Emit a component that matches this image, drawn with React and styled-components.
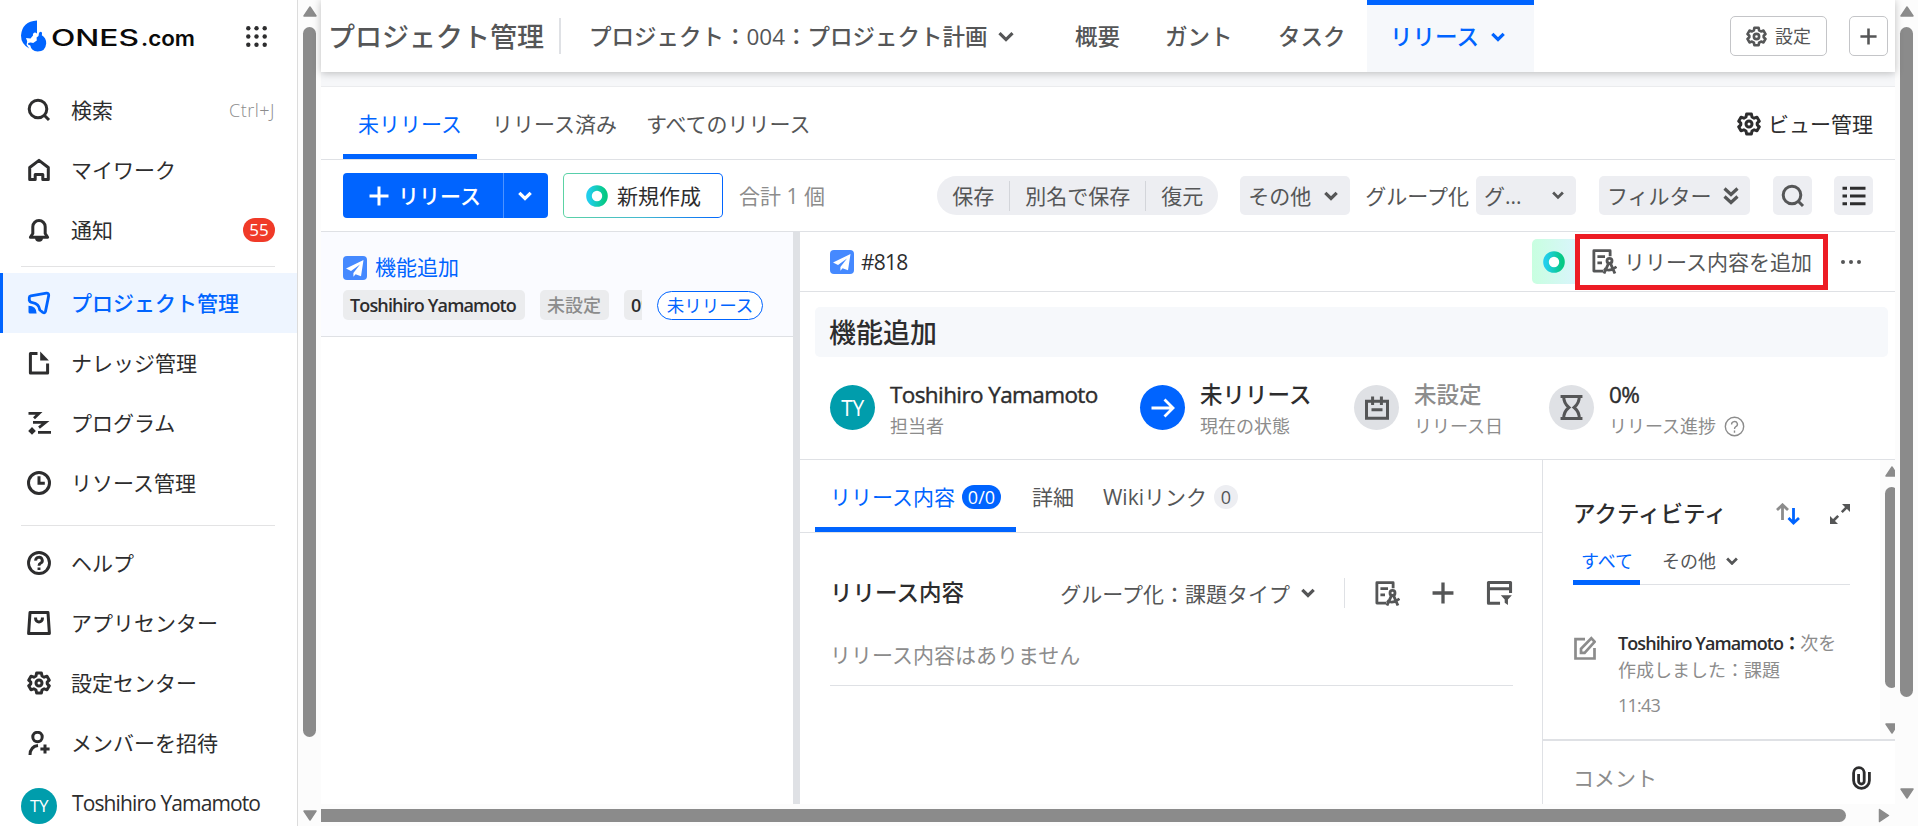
import React from 'react';
import styled, { createGlobalStyle, css } from 'styled-components';

const theme = {
  blue: '#0064ff',
  text: '#2d2d2e',
  sub: '#555657',
  muted: '#8c8c8c',
  line: '#dfe1e5',
  fill: '#edeef2',
  thumb: '#8b8b8b',
  teal: '#009dac',
};

const GlobalStyle = createGlobalStyle`
  * {
    box-sizing: border-box;
  }

  body {
    margin: 0;
    overflow: hidden;
    background: #fff;
    color: ${theme.text};
    font-family: 'Open Sans', 'Noto Sans CJK JP', sans-serif;
    font-size: 21px;
    line-height: 30px;
    white-space: nowrap;
  }

  svg {
    display: block;
    flex: none;
  }
`;

const Page = styled.div`
  display: flex;
  width: 1918px;
  height: 826px;
  overflow: hidden;
`;

/* ---------- sidebar ---------- */

const Sidebar = styled.aside`
  display: flex;
  flex-direction: column;
  flex: none;
  width: 298px;
  border-right: 1px solid #dcdcdc;
`;

const Brand = styled.div`
  display: flex;
  align-items: center;
  justify-content: space-between;
  height: 80px;
  padding: 0 30px 7px 21px;
`;

const NavGroup = styled.nav`
  padding-bottom: ${({ $bottom = 0 }) => $bottom}px;
`;

const NavItem = styled.div`
  display: flex;
  align-items: center;
  height: 60px;
  padding: 0 22px 0 27px;
  color: ${theme.text};

  ${({ $active }) => $active && css`
    padding-left: 24px;
    border-left: 3px solid ${theme.blue};
    background: #eef5ff;
    color: ${theme.blue};
    font-weight: 500;
  `}
`;

const NavLabel = styled.span`
  flex: 1;
  margin: -1px 0 0 20px;
`;

const Shortcut = styled.span`
  color: ${theme.muted};
  font-size: 18px;
  font-weight: 300;
  letter-spacing: 0.5px;
`;

const CountBadge = styled.span`
  width: 32px;
  height: 24px;
  border-radius: 12px;
  background: #f03a28;
  color: #fff;
  font-size: 17px;
  line-height: 24px;
  text-align: center;
`;

const NavDivider = styled.div`
  height: 1px;
  margin: 0 22px ${({ $after }) => $after}px 21px;
  background: #e3e3e4;
`;

const UserRow = styled.div`
  display: flex;
  margin-top: 15px;
  padding-left: 21px;
`;

const Avatar = styled.span`
  display: flex;
  align-items: center;
  justify-content: center;
  flex: none;
  width: ${({ $size }) => $size}px;
  height: ${({ $size }) => $size}px;
  border-radius: 50%;
  background: ${({ $bg }) => $bg || theme.teal};
  color: ${({ $bg }) => ($bg ? theme.sub : '#fff')};
  font-size: ${({ $size }) => ($size > 40 ? 21 : 17)}px;
  letter-spacing: -0.4px;
`;

const UserName = styled.span`
  margin-left: 15px;
  letter-spacing: -0.88px;
`;

/* ---------- scrollbars ---------- */

const VTrack = styled.div`
  display: flex;
  flex-direction: column;
  align-items: center;
  flex: none;
  width: ${({ $width }) => $width}px;
  padding: 6px 0 5px;
  background: #fcfcfc;
`;

const VThumb = styled.div`
  width: 13px;
  height: ${({ $height }) => $height}px;
  margin: 10px 0 auto;
  border-radius: 7px;
  background: ${theme.thumb};
`;

const HTrack = styled.div`
  display: flex;
  align-items: center;
  flex: none;
  height: 22px;
  padding-right: 27px;
  background: #fcfcfc;
`;

const HThumb = styled.div`
  width: 1525px;
  height: 13px;
  margin-right: auto;
  border-radius: 0 7px 7px 0;
  background: ${theme.thumb};
`;

/* ---------- header ---------- */

const Main = styled.main`
  display: flex;
  flex-direction: column;
  flex: none;
  width: 1574px;
`;

const Column = styled.div`
  display: flex;
  flex-direction: column;
  flex: none;
  width: 1597px;
`;

const Upper = styled.div`
  display: flex;
  height: 804px;
`;

const Header = styled.header`
  position: relative;
  display: flex;
  align-items: center;
  flex: none;
  height: 72px;
  padding: 0 7px 0 7px;
  background: #fff;
  box-shadow: 0 1px 8px rgba(0, 0, 0, 0.25);
  color: ${theme.sub};
  font-size: 22.5px;
  font-weight: 500;
`;

const AppTitle = styled.h1`
  width: 231px;
  margin: 0;
  padding-top: 2px;
  font-size: 27px;
  font-weight: 500;
`;

const HeaderDivider = styled.div`
  width: 2px;
  height: 36px;
  margin-right: 28px;
  background: ${theme.line};
`;

const ProjectName = styled.div`
  display: flex;
  align-items: center;
  gap: 10px;
  width: 486px;
  padding-top: 1px;
`;

const HeaderTab = styled.span`
  width: ${({ $width }) => $width}px;
  padding-top: 1px;
`;

const HeaderActiveTab = styled.div`
  display: flex;
  align-items: center;
  gap: 12px;
  width: 167px;
  height: 72px;
  margin-right: auto;
  padding: 0 0 4px 23px;
  border-top: 5px solid ${theme.blue};
  background: #f6f8fb;
  color: ${theme.blue};
`;

const OutlineButton = styled.button`
  display: flex;
  align-items: center;
  justify-content: center;
  gap: 8px;
  width: ${({ $width }) => $width}px;
  height: 40px;
  margin: 0 0 0 22px;
  padding: 0;
  border: 1px solid #c4c5c8;
  border-radius: 5px;
  background: #fff;
  color: ${theme.sub};
  font: inherit;
  font-size: 18px;
  font-weight: 400;
`;

const Gap = styled.div`
  flex: none;
  height: 15px;
  border-bottom: 1px solid #ebecee;
  background: #f6f7f9;
`;

/* ---------- view tabs and toolbar ---------- */

const ViewTabs = styled.div`
  display: flex;
  flex: none;
  height: 73px;
  padding: 0 22px;
  border-bottom: 1px solid ${theme.line};
  color: ${theme.sub};
`;

const ViewTab = styled.div`
  display: flex;
  align-items: center;
  height: 72px;
  padding: 2px 0 0;
  margin-right: 29px;

  ${({ $active, $after = 15 }) => $active && css`
    padding: 6px 15px 0;
    margin-right: ${$after}px;
    border-bottom: 5px solid ${theme.blue};
    color: ${theme.blue};
  `}
`;

const ManageViews = styled.div`
  display: flex;
  align-items: center;
  gap: 7px;
  margin-left: auto;
  padding-top: 2px;
  color: ${theme.text};
`;

const Toolbar = styled.div`
  display: flex;
  align-items: center;
  flex: none;
  height: 72px;
  padding: 0 22px;
  border-bottom: 1px solid ${theme.line};
  color: ${theme.sub};
`;

const PrimaryButton = styled.div`
  display: flex;
  align-items: center;
  width: 205px;
  height: 45px;
  border-radius: 4px;
  background: ${theme.blue};
  color: #fff;
  font-weight: 500;
`;

const PrimaryMain = styled.span`
  display: flex;
  align-items: center;
  gap: 9px;
  width: 161px;
  height: 45px;
  padding-left: 26px;
  border-right: 1px solid #4d93ff;
`;

const PrimaryArrow = styled.span`
  display: flex;
  flex: 1;
  justify-content: center;
  padding-right: 2px;
`;

const AiButton = styled.div`
  display: flex;
  align-items: center;
  gap: 9px;
  width: 160px;
  height: 45px;
  margin: 0 16px 0 15px;
  padding-left: 22px;
  border: 1px solid transparent;
  border-radius: 5px;
  background: linear-gradient(#fff, #fff) padding-box, linear-gradient(90deg, #5cd3a4, #43b9d0 50%, #0064ff) border-box;
  color: ${theme.text};
`;

const Total = styled.span`
  margin-right: auto;
  color: ${theme.muted};
`;

const SaveGroup = styled.div`
  display: flex;
  align-items: center;
  justify-content: center;
  width: 281px;
  height: 39px;
  margin-right: 22px;
  border-radius: 20px;
  background: ${theme.fill};
`;

const SaveAction = styled.span`
  padding: 0 15px;

  & + & {
    border-left: 1px solid #d3d5da;
  }
`;

const ToolButton = styled.div`
  display: flex;
  align-items: center;
  justify-content: ${({ $center }) => ($center ? 'center' : 'space-between')};
  width: ${({ $width = 39 }) => $width}px;
  height: 39px;
  margin-right: ${({ $after = 0 }) => $after}px;
  padding: ${({ $center, $pad = 12 }) => ($center ? 0 : `0 ${$pad}px 0 8px`)};
  border-radius: 5px;
  background: ${theme.fill};
`;

const ToolLabel = styled.span`
  margin-right: 7px;
`;

/* ---------- release list ---------- */

const Body = styled.div`
  display: flex;
  flex: 1;
  min-height: 0;
`;

const ReleaseList = styled.div`
  flex: none;
  width: 472px;
`;

const ReleaseItem = styled.div`
  height: 105px;
  padding: 20px 22px 0;
  border-bottom: 1px solid ${theme.line};
  background: #fafbff;
`;

const ReleaseTitle = styled.div`
  display: flex;
  align-items: center;
  gap: 8px;
  height: 32px;
  color: ${theme.blue};

  span {
    margin-top: -2px;
  }
`;

const Chips = styled.div`
  display: flex;
  align-items: center;
  gap: 15px;
  margin-top: 6px;
`;

const Chip = styled.span`
  width: ${({ $width }) => $width}px;
  height: 30px;
  padding-left: 7px;
  overflow: hidden;
  border-radius: ${({ $cut }) => ($cut ? '5px 0 0 5px' : '5px')};
  background: #ebecee;
  color: ${({ $muted }) => ($muted ? theme.muted : theme.text)};
  font-size: 18px;
  font-weight: ${({ $muted }) => ($muted ? 500 : 600)};
  letter-spacing: ${({ $tight }) => ($tight ? '-0.85px' : 0)};
`;

const StatusPill = styled.span`
  width: 106px;
  height: 29px;
  border: 1px solid ${theme.blue};
  border-radius: 15px;
  background: #fff;
  color: ${theme.blue};
  font-size: 17.5px;
  line-height: 27px;
  text-align: center;
`;

const Splitter = styled.div`
  flex: none;
  width: 7px;
  background: ${theme.line};
`;

/* ---------- release detail ---------- */

const Detail = styled.section`
  display: flex;
  flex-direction: column;
  flex: 1;
  min-width: 0;
`;

const DetailHead = styled.div`
  display: flex;
  align-items: center;
  flex: none;
  height: 60px;
  padding: 0 33px 0 30px;
  border-bottom: 1px solid ${theme.line};
`;

const IssueKey = styled.span`
  margin: 0 auto 0 7px;
  letter-spacing: -0.8px;
`;

const AiSquare = styled.div`
  display: flex;
  align-items: center;
  width: 43px;
  height: 45px;
  padding-left: 11px;
  border-radius: 5px 0 0 5px;
  background: linear-gradient(90deg, #c8ffe0, #d9f5fb);
`;

const Highlight = styled.div`
  display: flex;
  align-items: center;
  gap: 7px;
  width: 253px;
  height: 56px;
  margin-right: 12px;
  padding-left: 12px;
  border: 5px solid #ed1c24;
  color: ${theme.sub};
`;

const DetailTitle = styled.h2`
  flex: none;
  height: 50px;
  margin: 15px 7px 0 15px;
  padding: 1px 0 0 14px;
  border-radius: 5px;
  background: #f6f8fb;
  font-size: 27px;
  font-weight: 500;
  line-height: 50px;
`;

const Summary = styled.div`
  display: flex;
  flex: none;
  height: 103px;
  padding: 28px 0 0 30px;
  border-bottom: 1px solid ${theme.line};
`;

const SummaryItem = styled.div`
  display: flex;
  width: ${({ $width }) => $width}px;
`;

const SummaryText = styled.div`
  margin: -5px 0 0 15px;
`;

const SummaryValue = styled.div`
  height: 31px;
  color: ${({ $muted }) => ($muted ? theme.muted : theme.text)};
  font-size: 22.5px;
  font-weight: 500;
  letter-spacing: ${({ $tight }) => ($tight ? '-0.6px' : 0)};
  -webkit-text-stroke: ${({ $tight }) => ($tight ? '0.4px currentColor' : 0)};
`;

const SummaryLabel = styled.div`
  display: flex;
  align-items: center;
  gap: 8px;
  color: ${theme.muted};
  font-size: 18px;
`;

const DetailBody = styled.div`
  display: flex;
  flex: 1;
  min-height: 0;
`;

const DetailMain = styled.div`
  flex: none;
  width: 743px;
  border-right: 1px solid ${theme.line};
`;

const DetailTabs = styled.div`
  display: flex;
  height: 73px;
  padding-left: 15px;
  border-bottom: 1px solid ${theme.line};
  color: ${theme.sub};
`;

const TabBadge = styled.span`
  width: ${({ $width }) => $width}px;
  height: 24px;
  margin-left: 7px;
  border-radius: 12px;
  background: ${({ $solid }) => ($solid ? theme.blue : theme.fill)};
  color: ${({ $solid }) => ($solid ? '#fff' : theme.sub)};
  font-size: 18px;
  line-height: 24px;
  text-align: center;
`;

const Section = styled.div`
  padding: 37px 29px 0 30px;
  color: ${theme.sub};
`;

const SectionHead = styled.div`
  display: flex;
  align-items: center;
  height: 46px;
`;

const SectionTitle = styled.h3`
  margin: 0 auto 0 0;
  color: ${theme.text};
  font-size: 22.5px;
  font-weight: 500;
`;

const GroupBy = styled.span`
  margin-right: 11px;
  padding-top: 2px;
`;

const VLine = styled.div`
  width: 1px;
  height: 30px;
  margin: 0 30px 0 29px;
  background: ${theme.line};
`;

const SectionActions = styled.div`
  display: flex;
  align-items: center;
  gap: 32px;
`;

const Empty = styled.div`
  height: 70px;
  padding-top: 24px;
  border-bottom: 1px solid ${theme.line};
  color: ${theme.muted};
`;

/* ---------- activity ---------- */

const Activity = styled.aside`
  display: flex;
  flex-direction: column;
  flex: 1;
  min-width: 0;
`;

const ActivityScroll = styled.div`
  display: flex;
  flex: none;
  height: 279px;
  overflow: hidden;
`;

const ActivityContent = styled.div`
  flex: none;
  width: 337px;
  padding: 39px 30px 0 30px;
`;

const ActivityHead = styled.div`
  display: flex;
  align-items: center;
  height: 30px;
`;

const ActivityTitle = styled.h3`
  margin: 0 auto 0 0;
  font-size: 22.5px;
  font-weight: 500;
`;

const ExpandWrap = styled.span`
  margin-left: 30px;
`;

const ActivityTabs = styled.div`
  display: flex;
  height: 41px;
  margin-top: 15px;
  border-bottom: 1px solid ${theme.line};
  color: ${theme.sub};
  font-size: 18px;
`;

const ActivityTab = styled.div`
  display: flex;
  align-items: center;
  gap: 10px;
  height: 34px;
  padding: 0 7px;
  margin-right: 15px;

  ${({ $active }) => $active && css`
    height: 41px;
    padding: 0 7px 2px 8px;
    border-bottom: 5px solid ${theme.blue};
    color: ${theme.blue};
  `}
`;

const ActivityEntry = styled.div`
  display: flex;
  gap: 22px;
  margin-top: 45px;
  padding-left: 1px;
  font-size: 18px;
  line-height: 27px;
  color: ${theme.muted};

  svg {
    margin-top: 6px;
  }
`;

const Actor = styled.span`
  color: ${theme.text};
  font-weight: 600;
  letter-spacing: -0.9px;
`;

const Time = styled.div`
  margin-top: 8px;
  font-size: 18px;
  letter-spacing: -0.8px;
`;

const CommentBar = styled.div`
  display: flex;
  align-items: center;
  justify-content: space-between;
  flex: 1;
  padding: 10px 24px 0 30px;
  border-top: 2px solid ${theme.line};
  color: ${theme.muted};

  svg {
    color: ${theme.text};
  }
`;

const ScrollClip = styled.div`
  display: flex;
  flex: none;
  width: 15px;
  overflow: hidden;
`;

/* ---------- icons ---------- */

const Svg = ({ size = 24, w, h, box = '0 0 24 24', sw = 3, children }) => (
  <svg
    width={w || size}
    height={h || size}
    viewBox={box}
    fill="none"
    stroke="currentColor"
    strokeWidth={sw}
  >
    {children}
  </svg>
);

const ScrollArrow = ({ dir }) => {
  const turn = { up: 0, right: 90, down: 180 }[dir];
  return (
    <svg width="14" height="11" viewBox="0 0 14 11" overflow="visible">
      <path
        d="M7 1 L13 10 H1 Z"
        fill={theme.thumb}
        stroke={theme.thumb}
        strokeWidth="1.5"
        strokeLinejoin="round"
        transform={`rotate(${turn} 7 5.5)`}
      />
    </svg>
  );
};

const Chevron = ({ w = 14, sw = 3.2 }) => (
  <Svg w={w} h={(w * 10) / 14} box="0 0 14 10" sw={sw}>
    <path d="M1.3 1.8 L7 7.5 L12.7 1.8" />
  </Svg>
);

const DoubleChevron = () => (
  <Svg w={16} h={18} box="0 0 16 18" sw={3.2}>
    <path d="M1.5 1.5 L8 7.5 L14.5 1.5 M1.5 9.5 L8 15.5 L14.5 9.5" />
  </Svg>
);

const Plus = ({ size = 20, sw = 3 }) => (
  <Svg size={size} box="0 0 20 20" sw={sw}>
    <path d="M10 0.5 V19.5 M0.5 10 H19.5" />
  </Svg>
);

const SearchIcon = () => (
  <Svg>
    <circle cx="11" cy="11" r="8.8" />
    <path d="M17 17 L22 22" />
  </Svg>
);

const HomeIcon = () => (
  <Svg>
    <path d="M2.7 9.5 L12 2.4 L21.3 9.5 V21.6 H15.8 V16.5 H8.2 V21.6 H2.7 Z" strokeLinejoin="round" />
  </Svg>
);

const BellIcon = () => (
  <Svg>
    <path d="M3.4 19.2 L5.8 15.5 V8.8 A6.2 6.2 0 0 1 18.2 8.8 V15.5 L20.6 19.2 Z" strokeLinejoin="round" />
    <path d="M8 19.8 H16 A4 4 0 0 1 8 19.8 Z" fill="currentColor" stroke="none" />
  </Svg>
);

const ProjectIcon = () => (
  <Svg sw={2.8}>
    <path
      d="M2.3 10 V6.6 Q2.3 5.2 3.8 4.9 L19.4 2.2 Q22 2 21.7 4.6 L18.5 20.4 Q17.8 22.6 15.8 21.3 L12.8 19 Q12 12.5 5.5 11.6 Q2.3 11.4 2.3 8.5"
      strokeLinejoin="round"
    />
    <path d="M1.5 14.8 Q9.5 15 9.6 22.6 H3 Q1.5 22.6 1.5 21 Z" fill="currentColor" stroke="none" />
  </Svg>
);

const WikiIcon = () => (
  <Svg>
    <path d="M10.5 2.4 H3.4 V22 H20.6 V12.5" strokeLinejoin="round" />
    <path d="M13.2 0.6 L21.9 9.4 H13.2 Z" fill="currentColor" stroke="none" />
  </Svg>
);

const ProgramIcon = () => (
  <Svg sw={2.8}>
    <path d="M1.5 2.4 H12 L7 7.2 M6 11.4 H18.5 L12 16.6 M11 21.4 H24" />
    <path d="M5 16 L8.8 19.9 L5 23.8 L1.2 19.9 Z" fill="currentColor" stroke="none" />
  </Svg>
);

const ClockIcon = () => (
  <Svg>
    <circle cx="12" cy="12" r="10.5" />
    <path d="M12 5.2 V12.3 H17.8" />
  </Svg>
);

const HelpIcon = ({ size = 24, sw = 2.9 }) => (
  <Svg size={size} sw={sw}>
    <circle cx="12" cy="12" r="10.5" />
    <path d="M8.7 9.7 A3.3 3.1 0 1 1 13.5 12.2 Q12 13 12 14.8 M12 16.6 V19" />
  </Svg>
);

const StoreIcon = () => (
  <Svg>
    <path d="M3 1.6 H21 L22.4 22.4 H1.6 Z" strokeLinejoin="round" />
    <path d="M8.6 6.4 V7.6 A3.4 3.4 0 0 0 15.4 7.6 V6.4" />
  </Svg>
);

const GearIcon = ({ size = 24 }) => (
  <Svg size={size} sw={3}>
    <path
      d="M9.6 2 H14.4 L15 5 L17.2 6.2 L20 5.2 L22.3 9.2 L20.2 11.2 V12.8 L22.3 14.8 L20 18.8 L17.2 17.8 L15 19 L14.4 22 H9.6 L9 19 L6.8 17.8 L4 18.8 L1.7 14.8 L3.8 12.8 V11.2 L1.7 9.2 L4 5.2 L6.8 6.2 L9 5 Z"
      strokeLinejoin="round"
    />
    <circle cx="12" cy="12" r="3" />
  </Svg>
);

const InviteIcon = () => (
  <Svg>
    <circle cx="10.5" cy="6" r="4.7" />
    <path d="M3 24 Q3.2 15.6 11 14.6 M18 13.4 V22.6 M13.4 18 H22.6" />
  </Svg>
);

const GridIcon = () => (
  <svg width="21" height="21" viewBox="0 0 21 21" fill={theme.text}>
    {[2.3, 10.5, 18.7].map(y => [2.3, 10.5, 18.7].map(x => (
      <circle key={`${x}-${y}`} cx={x} cy={y} r="2.2" />
    )))}
  </svg>
);

const Logo = () => (
  <svg width="176" height="34" viewBox="0 0 176 34">
    <path
      d="M16 0.5 V13.5 L14.2 12.4 Q11.5 12.6 12 15.6 L9.5 18.5 L5 18 L6.2 21.3 L5.6 24.8 L8.2 28.5 Q0 24 0 15.5 Q1 1.5 16 0.5 Z"
      fill={theme.blue}
    />
    <path
      d="M19.5 11.8 Q21.6 11.8 20.8 15.2 Q25.2 17.5 25.2 23.4 Q24.5 31.4 16.6 31.6 Q10.2 31 9.3 25.5 L7 24.6 Q6.6 22.4 9.8 22.5 L12.2 23 L15.8 20.5 L15.6 17.6 L17.5 16 L18 12.8 Z"
      fill={theme.blue}
    />
    <g fill="#0a0a0a" fontFamily="Inter">
      <text x="30" y="26" fontSize="22.5" fontWeight="500" textLength="88" lengthAdjust="spacingAndGlyphs">ONES</text>
      <text x="120" y="26" fontSize="21" fontWeight="600" textLength="54" lengthAdjust="spacingAndGlyphs">.com</text>
    </g>
  </svg>
);

const PlaneIcon = () => (
  <svg width="24" height="24" viewBox="0 0 24 24">
    <rect width="24" height="24" rx="4" fill="#4589ff" />
    <path d="M3 12.4 L20.5 4 L18 20.2 L12.6 18.2 L10.4 20.8 V17 L17 8.6 L8 15 Z" fill="#fff" />
  </svg>
);

const RingIcon = () => (
  <svg width="22" height="22" viewBox="0 0 22 22">
    <defs>
      <linearGradient id="ring" x1="0" x2="1">
        <stop offset="0" stopColor="#22ceec" />
        <stop offset="1" stopColor="#05c983" />
      </linearGradient>
    </defs>
    <circle cx="11" cy="11" r="8" fill="#fff" stroke="url(#ring)" strokeWidth="5.6" />
  </svg>
);

const ListIcon = () => (
  <Svg w={24} h={20} box="0 0 24 20" sw={3}>
    <path d="M0.5 2.2 H5 M8 2.2 H23.5 M0.5 10 H5 M8 10 H23.5 M0.5 17.8 H5 M8 17.8 H23.5" stroke={theme.text} />
  </Svg>
);

const ScopeIcon = () => (
  <Svg size={25} sw={2.7}>
    <path d="M11 21.2 H1.8 V1.6 H17.4 V7 M5.2 7.4 H12.5 M5.2 13.4 H9.6" strokeLinejoin="round" />
    <circle cx="16.8" cy="11.4" r="2.4" />
    <path d="M16 13.5 L11.5 23.5 M17.6 13.5 L22 23.5 M11.5 18.8 Q17 22.5 23.5 17" />
  </Svg>
);

const FilterCardIcon = () => (
  <Svg w={27} h={26} sw={2.8}>
    <path d="M12.5 21.4 H1.8 V2.4 H22.2 V12 M1.8 8 H22.2" strokeLinejoin="round" />
    <path d="M13.2 14 H23.4 L19.8 18 V23 L16.8 21 V18 Z" fill="currentColor" stroke="none" />
  </Svg>
);

const DotsIcon = () => (
  <svg width="22" height="6" viewBox="0 0 22 6" fill={theme.sub}>
    <circle cx="3" cy="3" r="2" />
    <circle cx="11" cy="3" r="2" />
    <circle cx="19" cy="3" r="2" />
  </svg>
);

const ArrowIcon = () => (
  <Svg size={24} sw={2.8}>
    <path d="M0.5 12 H22 M13.5 3.5 L22 12 L13.5 20.5" stroke="#fff" />
  </Svg>
);

const CalendarIcon = () => (
  <Svg size={24} sw={3}>
    <path d="M1.5 5.2 H22.5 V22.2 H1.5 Z M7.6 0.5 V9 M16.4 0.5 V9 M6.5 13.8 H17.5" />
  </Svg>
);

const HourglassIcon = () => (
  <Svg size={25} sw={2.9}>
    <path d="M1.5 1.5 H22.5 M1.5 22.5 H22.5 M4.5 1.5 Q4.5 8 9.5 12 Q4.5 16 4.5 22.5 M19.5 1.5 Q19.5 8 14.5 12 Q19.5 16 19.5 22.5" />
  </Svg>
);

const SortIcon = () => (
  <Svg w={24} h={22} box="0 0 24 22" sw={2.8}>
    <path d="M6.5 17 V2 M1 7 L6.5 1.8 L12 7" stroke={theme.muted} />
    <path d="M17.5 5 V20 M12.5 15 L17.5 20 L23 15" stroke={theme.blue} />
  </Svg>
);

const ExpandIcon = () => (
  <Svg w={20} h={20} box="0 0 20 20" sw={2.6}>
    <path d="M11.8 8.2 L17 3 M8.2 11.8 L3 17" stroke={theme.sub} />
    <path d="M12 0 H20 V8 Z M0 12 L8 20 H0 Z" fill={theme.sub} stroke="none" />
  </Svg>
);

const EditIcon = () => (
  <Svg w={22} h={24} box="0 0 22 24" sw={2.7}>
    <path d="M11 3.2 H1.5 V22.5 H20.5 V12" />
    <path d="M7 16.8 V12.8 L17.3 2.2 L20.6 5.8 L10.6 16.8 Z" />
  </Svg>
);

const ClipIcon = () => (
  <Svg w={19} h={24} box="0 0 19 24" sw={2.8}>
    <path d="M9.5 18 A2.9 2.9 0 0 1 6.6 15 V8 M12.2 5.5 V15 A2.9 2.9 0 0 1 9.4 18 M17.4 6 V14.5 A7.9 7.9 0 0 1 1.6 14.5 V7 A5.3 5.3 0 0 1 12.2 7" />
  </Svg>
);

const topNav = [
  { label: '検索', icon: <SearchIcon />, extra: <Shortcut>Ctrl+J</Shortcut> },
  { label: 'マイワーク', icon: <HomeIcon /> },
  { label: '通知', icon: <BellIcon />, extra: <CountBadge>55</CountBadge> },
];

const appNav = [
  { label: 'プロジェクト管理', icon: <ProjectIcon />, active: true },
  { label: 'ナレッジ管理', icon: <WikiIcon /> },
  { label: 'プログラム', icon: <ProgramIcon /> },
  { label: 'リソース管理', icon: <ClockIcon /> },
];

const bottomNav = [
  { label: 'ヘルプ', icon: <HelpIcon /> },
  { label: 'アプリセンター', icon: <StoreIcon /> },
  { label: '設定センター', icon: <GearIcon /> },
  { label: 'メンバーを招待', icon: <InviteIcon /> },
];

const NavList = ({ items, bottom }) => (
  <NavGroup $bottom={bottom}>
    {items.map(item => (
      <NavItem key={item.label} $active={item.active}>
        {item.icon}
        <NavLabel>{item.label}</NavLabel>
        {item.extra}
      </NavItem>
    ))}
  </NavGroup>
);

const ReleaseDetail = () => (
  <Detail>
    <DetailHead>
      <PlaneIcon />
      <IssueKey>#818</IssueKey>
      <AiSquare><RingIcon /></AiSquare>
      <Highlight>
        <ScopeIcon />
        リリース内容を追加
      </Highlight>
      <DotsIcon />
    </DetailHead>
    <DetailTitle>機能追加</DetailTitle>
    <Summary>
      <SummaryItem $width={310}>
        <Avatar $size={45}>TY</Avatar>
        <SummaryText>
          <SummaryValue $tight>Toshihiro Yamamoto</SummaryValue>
          <SummaryLabel>担当者</SummaryLabel>
        </SummaryText>
      </SummaryItem>
      <SummaryItem $width={214}>
        <Avatar $size={45} $bg={theme.blue}><ArrowIcon /></Avatar>
        <SummaryText>
          <SummaryValue>未リリース</SummaryValue>
          <SummaryLabel>現在の状態</SummaryLabel>
        </SummaryText>
      </SummaryItem>
      <SummaryItem $width={195}>
        <Avatar $size={45} $bg={theme.line}><CalendarIcon /></Avatar>
        <SummaryText>
          <SummaryValue $muted>未設定</SummaryValue>
          <SummaryLabel>リリース日</SummaryLabel>
        </SummaryText>
      </SummaryItem>
      <SummaryItem $width={220}>
        <Avatar $size={45} $bg={theme.line}><HourglassIcon /></Avatar>
        <SummaryText>
          <SummaryValue $tight>0%</SummaryValue>
          <SummaryLabel>
            リリース進捗
            <HelpIcon size={21} sw={1.6} />
          </SummaryLabel>
        </SummaryText>
      </SummaryItem>
    </Summary>
    <DetailBody>
      <DetailMain>
        <DetailTabs>
          <ViewTab $active $after={16}>
            リリース内容
            <TabBadge $solid $width={39}>0/0</TabBadge>
          </ViewTab>
          <ViewTab>詳細</ViewTab>
          <ViewTab>
            Wikiリンク
            <TabBadge $width={24}>0</TabBadge>
          </ViewTab>
        </DetailTabs>
        <Section>
          <SectionHead>
            <SectionTitle>リリース内容</SectionTitle>
            <GroupBy>グループ化：課題タイプ</GroupBy>
            <Chevron />
            <VLine />
            <SectionActions>
              <ScopeIcon />
              <Plus size={22} />
              <FilterCardIcon />
            </SectionActions>
          </SectionHead>
          <Empty>リリース内容はありません</Empty>
        </Section>
      </DetailMain>
      <Activity>
        <ActivityScroll>
          <ActivityContent>
            <ActivityHead>
              <ActivityTitle>アクティビティ</ActivityTitle>
              <SortIcon />
              <ExpandWrap><ExpandIcon /></ExpandWrap>
            </ActivityHead>
            <ActivityTabs>
              <ActivityTab $active>すべて</ActivityTab>
              <ActivityTab>その他 <Chevron w={12} /></ActivityTab>
            </ActivityTabs>
            <ActivityEntry>
              <EditIcon />
              <div>
                <Actor>Toshihiro Yamamoto：</Actor>次を<br />
                作成しました：課題
                <Time>11:43</Time>
              </div>
            </ActivityEntry>
          </ActivityContent>
          <ScrollClip>
            <VTrack $width={23}>
              <ScrollArrow dir="up" />
              <VThumb $height={201} />
              <ScrollArrow dir="down" />
            </VTrack>
          </ScrollClip>
        </ActivityScroll>
        <CommentBar>
          コメント
          <ClipIcon />
        </CommentBar>
      </Activity>
    </DetailBody>
  </Detail>
);

const App = () => (
  <Page>
    <GlobalStyle />
    <Sidebar>
      <Brand>
        <Logo />
        <GridIcon />
      </Brand>
      <NavList items={topNav} bottom={6} />
      <NavDivider $after={6} />
      <NavList items={appNav} bottom={12} />
      <NavDivider $after={7} />
      <NavList items={bottomNav} />
      <UserRow>
        <Avatar $size={36}>TY</Avatar>
        <UserName>Toshihiro Yamamoto</UserName>
      </UserRow>
    </Sidebar>
    <VTrack $width={23}>
      <ScrollArrow dir="up" />
      <VThumb $height={710} />
      <ScrollArrow dir="down" />
    </VTrack>
    <Column>
      <Upper>
        <Main>
          <Header>
            <AppTitle>プロジェクト管理</AppTitle>
            <HeaderDivider />
            <ProjectName>
              プロジェクト：004：プロジェクト計画
              <Chevron w={16} sw={2.8} />
            </ProjectName>
            <HeaderTab $width={90}>概要</HeaderTab>
            <HeaderTab $width={113}>ガント</HeaderTab>
            <HeaderTab $width={89}>タスク</HeaderTab>
            <HeaderActiveTab>
              リリース
              <Chevron />
            </HeaderActiveTab>
            <OutlineButton $width={97}>
              <GearIcon size={21} />
              設定
            </OutlineButton>
            <OutlineButton $width={39}>
              <Plus size={17} />
            </OutlineButton>
          </Header>
          <Gap />
          <ViewTabs>
            <ViewTab $active>未リリース</ViewTab>
            <ViewTab>リリース済み</ViewTab>
            <ViewTab>すべてのリリース</ViewTab>
            <ManageViews>
              <GearIcon />
              ビュー管理
            </ManageViews>
          </ViewTabs>
          <Toolbar>
            <PrimaryButton>
              <PrimaryMain>
                <Plus />
                リリース
              </PrimaryMain>
              <PrimaryArrow><Chevron /></PrimaryArrow>
            </PrimaryButton>
            <AiButton>
              <RingIcon />
              新規作成
            </AiButton>
            <Total>合計 1 個</Total>
            <SaveGroup>
              <SaveAction>保存</SaveAction>
              <SaveAction>別名で保存</SaveAction>
              <SaveAction>復元</SaveAction>
            </SaveGroup>
            <ToolButton $width={110} $after={15}>
              その他
              <Chevron />
            </ToolButton>
            <ToolLabel>グループ化</ToolLabel>
            <ToolButton $width={100} $after={23}>
              グ...
              <Chevron w={12} />
            </ToolButton>
            <ToolButton $width={151} $after={23} $pad={11}>
              フィルター
              <DoubleChevron />
            </ToolButton>
            <ToolButton $center $after={22}><SearchIcon /></ToolButton>
            <ToolButton $center><ListIcon /></ToolButton>
          </Toolbar>
          <Body>
            <ReleaseList>
              <ReleaseItem>
                <ReleaseTitle>
                  <PlaneIcon />
                  <span>機能追加</span>
                </ReleaseTitle>
                <Chips>
                  <Chip $width={182} $tight>Toshihiro Yamamoto</Chip>
                  <Chip $width={69} $muted>未設定</Chip>
                  <Chip $width={18} $cut>0%</Chip>
                  <StatusPill>未リリース</StatusPill>
                </Chips>
              </ReleaseItem>
            </ReleaseList>
            <Splitter />
            <ReleaseDetail />
          </Body>
        </Main>
        <VTrack $width={23}>
          <ScrollArrow dir="up" />
          <VThumb $height={670} />
          <ScrollArrow dir="down" />
        </VTrack>
      </Upper>
      <HTrack>
        <HThumb />
        <ScrollArrow dir="right" />
      </HTrack>
    </Column>
  </Page>
);

export default App;
